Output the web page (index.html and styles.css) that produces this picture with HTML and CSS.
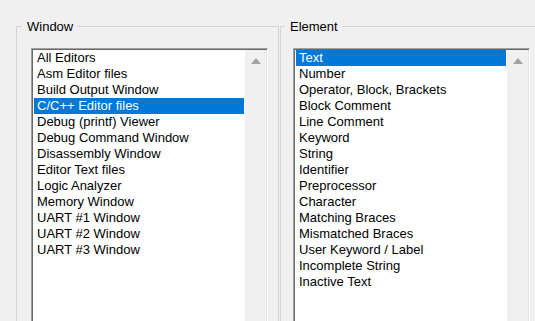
FILE: index.html
```html
<!DOCTYPE html>
<html lang="en">

<head>
  <meta charset="UTF-8">
  <title>Colors &amp; Fonts</title>
  <link rel="stylesheet" href="styles.css">
</head>

<body>
  <div class="dialog">
    <fieldset class="group group-window">
      <legend>Window</legend>
      <div class="listbox">
        <ul class="items">
          <li>All Editors</li>
          <li>Asm Editor files</li>
          <li>Build Output Window</li>
          <li class="selected">C/C++ Editor files</li>
          <li>Debug (printf) Viewer</li>
          <li>Debug Command Window</li>
          <li>Disassembly Window</li>
          <li>Editor Text files</li>
          <li>Logic Analyzer</li>
          <li>Memory Window</li>
          <li>UART #1 Window</li>
          <li>UART #2 Window</li>
          <li>UART #3 Window</li>
        </ul>
        <div class="scrollbar">
          <div class="arrow-up"><span></span></div>
        </div>
      </div>
    </fieldset>

    <fieldset class="group group-element">
      <legend>Element</legend>
      <div class="listbox">
        <ul class="items">
          <li class="selected">Text</li>
          <li>Number</li>
          <li>Operator, Block, Brackets</li>
          <li>Block Comment</li>
          <li>Line Comment</li>
          <li>Keyword</li>
          <li>String</li>
          <li>Identifier</li>
          <li>Preprocessor</li>
          <li>Character</li>
          <li>Matching Braces</li>
          <li>Mismatched Braces</li>
          <li>User Keyword / Label</li>
          <li>Incomplete String</li>
          <li>Inactive Text</li>
        </ul>
        <div class="scrollbar">
          <div class="arrow-up"><span></span></div>
        </div>
      </div>
    </fieldset>
  </div>
</body>

</html>
```

FILE: styles.css
```css
* {
  box-sizing: border-box;
}

html,
body {
  height: 100%;
}

body {
  margin: 0;
  background: #f0f0f0;
  font-family: 'Liberation Sans', Arial, sans-serif;
  font-size: 13px;
  color: #000;
  overflow: hidden;
}

.dialog {
  display: flex;
  gap: 1px;
  height: 100%;
  padding: 19px 0 0 16px;
}

.group {
  margin: 0;
  border: 1px solid #d5d5d5;
  border-bottom: none;
  padding: 14px 0 0 0;
  min-width: 0;
}

.group legend {
  padding: 0 4px 0 5px;
  line-height: 15px;
}

.group-window {
  width: 263px;
  padding-left: 14px;
}

.group-window legend {
  margin-left: -9px;
}

.group-element {
  flex: 1;
  border-right: none;
  padding-left: 12px;
}

.group-element legend {
  margin-left: -8px;
}

.listbox {
  display: flex;
  width: 237px;
  height: 100%;
  background: #fff;
  border: 1px solid;
  border-bottom: none;
  border-color: #a0a0a0 #fff #fff #a0a0a0;
  box-shadow: inset 1px 1px #696969, inset -1px 0 #e3e3e3;
  padding: 1px 1px 0 1px;
}

.items {
  list-style: none;
  margin: 0;
  padding: 0 1px;
  flex: 1;
}

.items li {
  height: 16px;
  line-height: 16px;
  padding-left: 3px;
  white-space: nowrap;
}

.items li.selected {
  background: #0078d7;
  color: #fff;
}

.scrollbar {
  width: 21px;
  background: #f0f0f0;
}

.arrow-up {
  height: 21px;
  display: flex;
  align-items: center;
  justify-content: center;
}

.arrow-up span {
  width: 0;
  height: 0;
  border-left: 5px solid transparent;
  border-right: 5px solid transparent;
  border-bottom: 6px solid #a3a3a3;
}
```
